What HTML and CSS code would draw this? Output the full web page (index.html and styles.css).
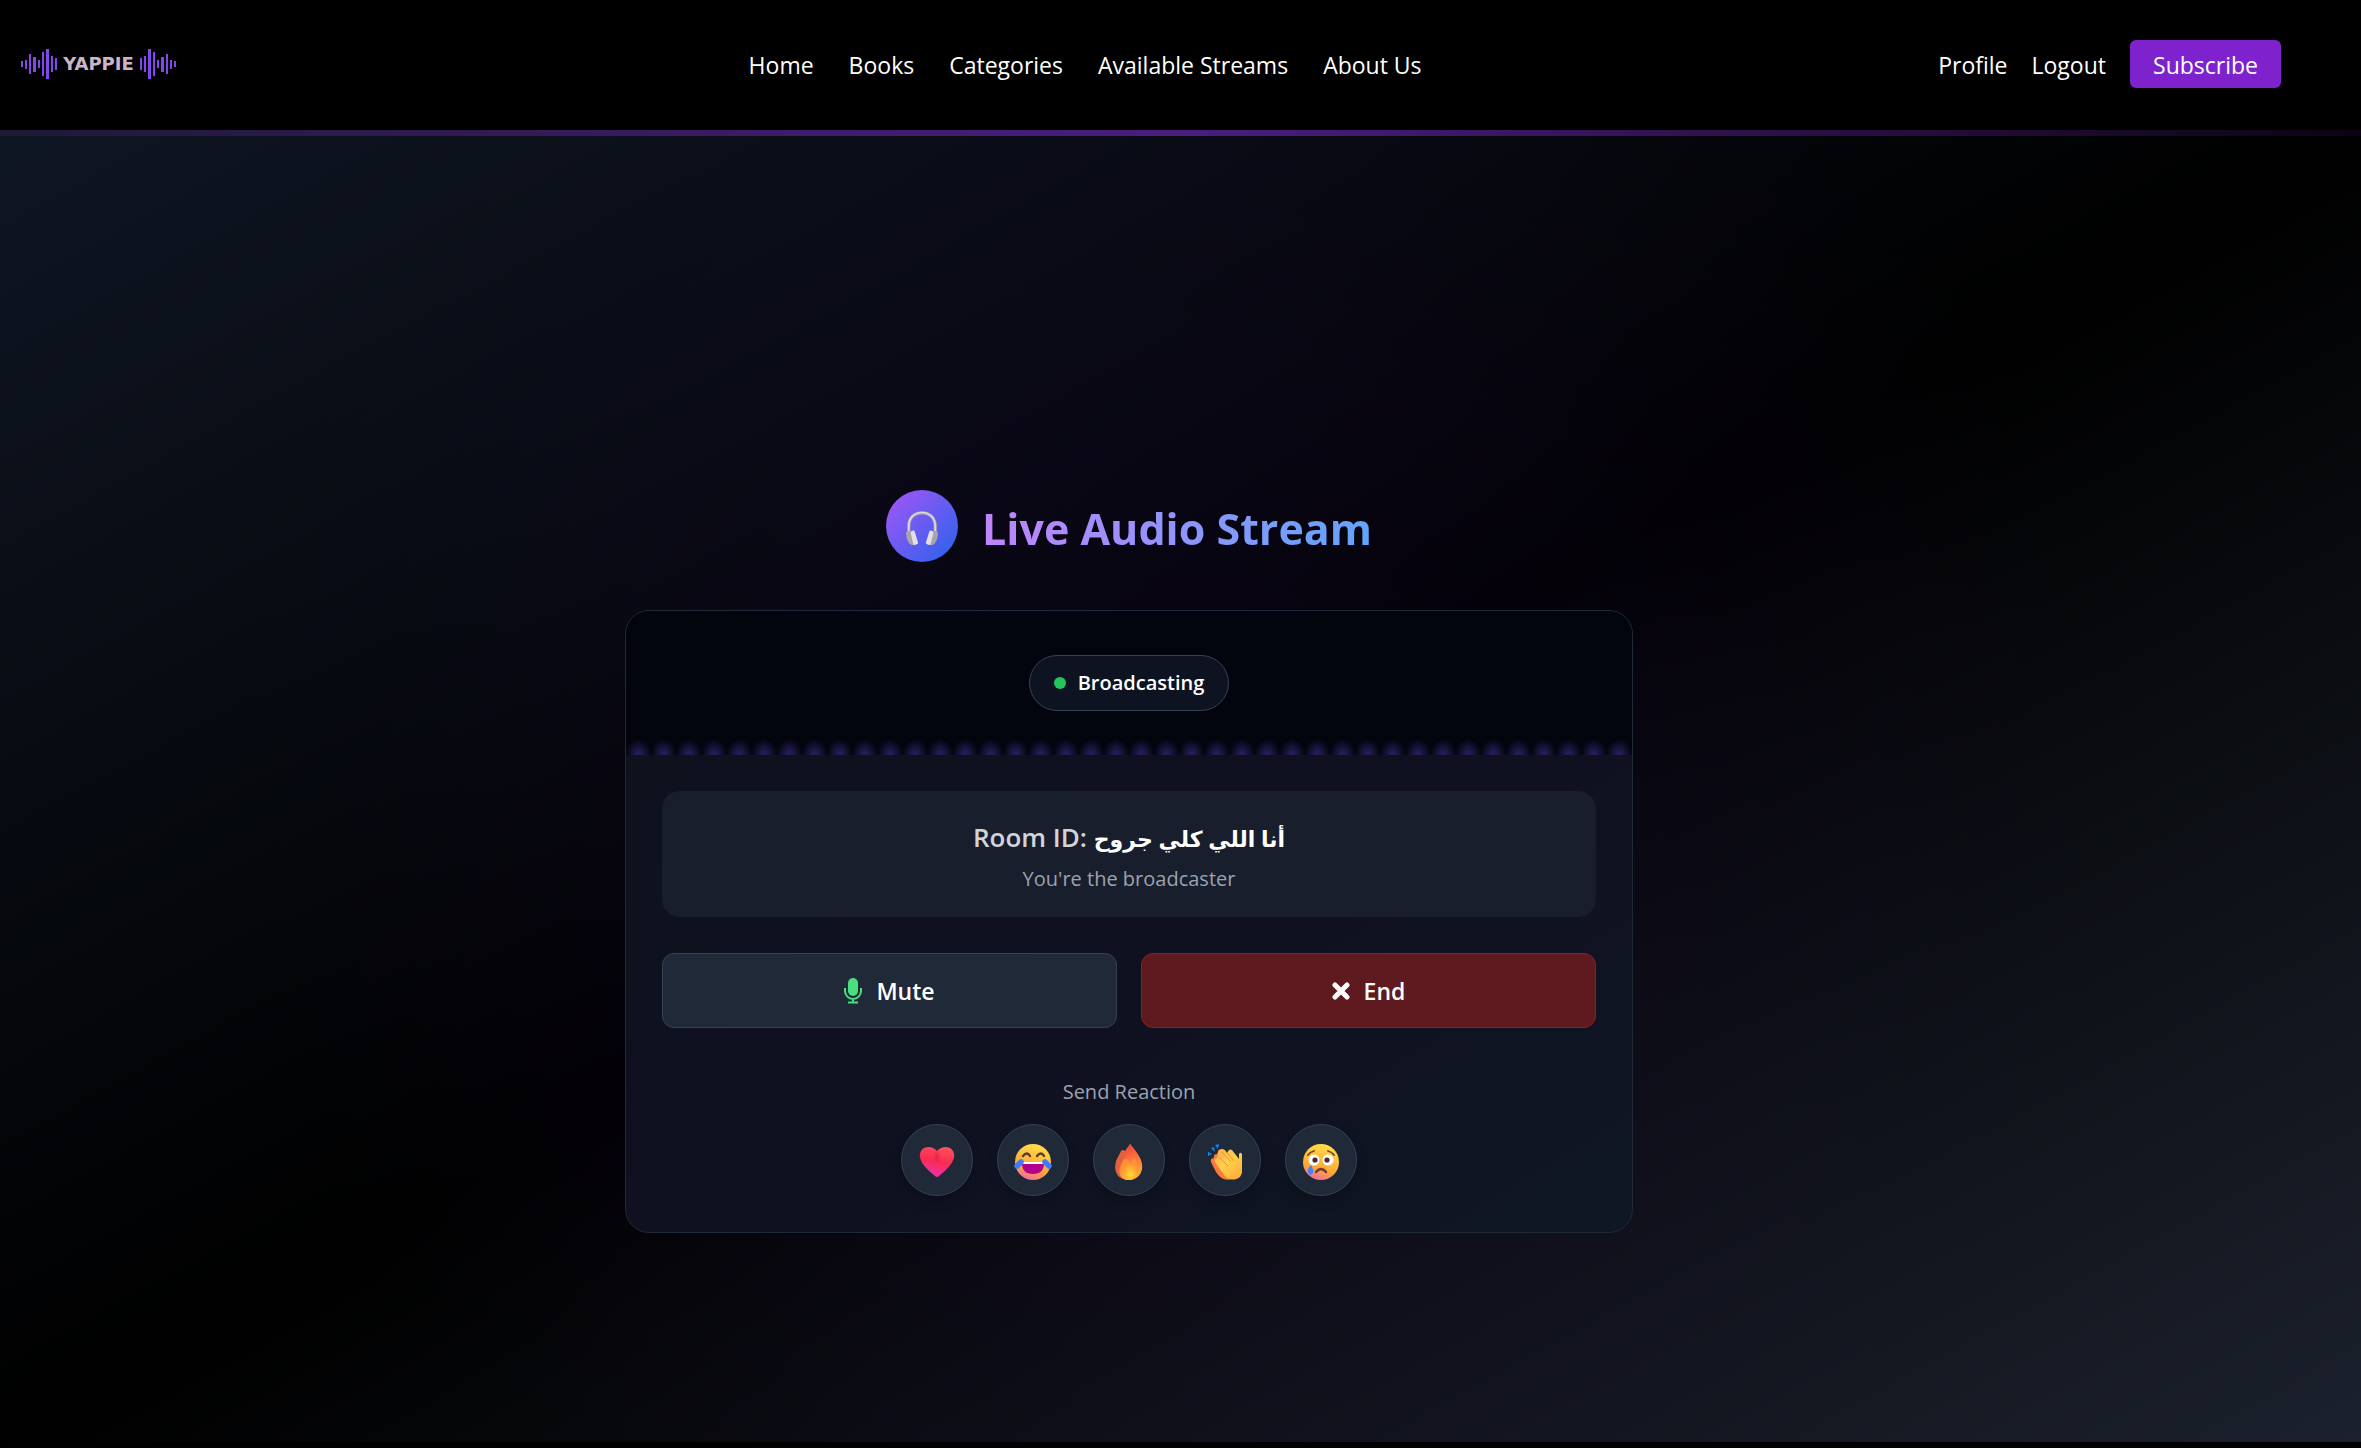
FILE: index.html
```html
<!DOCTYPE html>
<html lang="en">
<head>
<meta charset="utf-8">
<meta name="viewport" content="width=device-width, initial-scale=1">
<title>Yappie - Live Audio Stream</title>
<link rel="stylesheet" href="styles.css">
</head>
<body>
<header class="site-header">
  <a class="logo" href="#" aria-label="Yappie home">
    <svg class="wave" viewBox="0 0 38 32" aria-hidden="true"><path d="M1 13h2v6H1zM5 12h2v9H5zM9 6h2v20H9zM13 9h3v15h-3zM18 12h2v8h-2zM22 4h2v24h-2zM26 1h3v30h-3zM31 8h2v16h-2zM35 10h2v12h-2z"/></svg>
    <span class="wordmark">YAPPIE</span>
    <svg class="wave wave-right" viewBox="0 0 38 32" aria-hidden="true"><path d="M1 13h2v6H1zM5 12h2v9H5zM9 6h2v20H9zM13 9h3v15h-3zM18 12h2v8h-2zM22 4h2v24h-2zM26 1h3v30h-3zM31 8h2v16h-2zM35 10h2v12h-2z"/></svg>
  </a>
  <nav class="main-nav" aria-label="Main">
    <a href="#">Home</a>
    <a href="#">Books</a>
    <a href="#">Categories</a>
    <a href="#">Available Streams</a>
    <a href="#">About Us</a>
  </nav>
  <div class="account">
    <a href="#">Profile</a>
    <a href="#">Logout</a>
    <button class="subscribe" type="button">Subscribe</button>
  </div>
</header>
<div class="header-line"></div>
<main class="stage">
  <div class="title-row">
    <span class="title-icon" aria-hidden="true">
      <svg viewBox="0 0 36 36">
        <path d="M4 23V16C4 7 10 2 18 2s14 5 14 14v7" fill="none" stroke="#aaa5ae" stroke-width="3.4"/>
        <path d="M4 22V16C4 7 10 1.600 18 1.600s14 5.400 14 14.400v6" fill="none" stroke="#dcd7dd" stroke-width="1.800"/>
        <path d="M1 24q0-3 4-3l3 1 3 14H7Q2 34 1 24z" fill="#a9a3aa"/>
        <path d="M35 24q0-3-4-3l-3 1-3 14h4q5-2 6-12z" fill="#a9a3aa"/>
        <path d="M6 23q1-3 4-2l4 13q-1 2-5 2z" fill="#e3dfe5"/>
        <path d="M30 23q-1-3-4-2l-4 13q1 2 5 2z" fill="#e3dfe5"/>
      </svg>
    </span>
    <h1>Live Audio Stream</h1>
  </div>
  <section class="card">
    <div class="card-top">
      <div class="status"><span class="dot"></span>Broadcasting</div>
      <div class="bars" aria-hidden="true"></div>
    </div>
    <div class="card-body">
      <div class="room">
        <h2>Room ID: <bdi lang="ar">أنا اللي كلي جروح</bdi></h2>
        <p>You're the broadcaster</p>
      </div>
      <div class="controls">
        <button class="control" type="button">
          <svg class="mic" viewBox="0 0 18 26" aria-hidden="true"><rect x="4" y="0" width="10" height="18" rx="5" fill="currentColor"/><path d="M1 10v3a8 8 0 0 0 16 0v-3M9 21v3M4 24.500h10" fill="none" stroke="currentColor" stroke-width="2"/></svg>
          Mute
        </button>
        <button class="control end" type="button">
          <svg class="cross" viewBox="0 0 18 18" aria-hidden="true"><path d="M3 3l12 12M15 3L3 15" stroke="currentColor" stroke-width="5" stroke-linecap="round"/></svg>
          End
        </button>
      </div>
      <p class="reaction-label">Send Reaction</p>
      <div class="reactions">
        <button type="button" aria-label="Love">
          <svg viewBox="0 0 36 36"><defs><linearGradient id="heart" x1=".7" y1="0" x2=".4" y2="1"><stop stop-color="#ff5060"/><stop offset=".5" stop-color="#fa2b4f"/><stop offset="1" stop-color="#ee31b4"/></linearGradient><radialGradient id="heartShade"><stop stop-color="#c9204d" stop-opacity=".6"/><stop offset="1" stop-color="#c9204d" stop-opacity="0"/></radialGradient></defs><path d="M18 7C22 2 30 2 33 5.500c6 7.500-1 17-13 26.500q-2 2-4 0C4 22.500-3 13 3 5.500 6 2 14 2 18 7z" fill="url(#heart)"/><ellipse cx="18" cy="13" rx="4" ry="8" fill="url(#heartShade)"/></svg>
        </button>
        <button type="button" aria-label="Laugh">
          <svg viewBox="0 0 38 36"><defs><linearGradient id="face" x1=".7" y1="0" x2=".4" y2="1"><stop stop-color="#ffdf49"/><stop offset=".7" stop-color="#ffa736"/><stop offset="1" stop-color="#ee70a0"/></linearGradient></defs><circle cx="19" cy="18" r="18" fill="url(#face)"/><path d="M9 12q4-5 7 0M23 12q4-5 7 0" fill="none" stroke="#583a3a" stroke-width="2.400" stroke-linecap="round"/><path d="M8 19h22q0 11-11 11T8 19z" fill="#b3008d"/><path d="M8 19h22" stroke="#fff" stroke-width="2"/><path d="M7 18L3 22M31 18l4 4" stroke="#427aff" stroke-width="5.500" stroke-linecap="round"/></svg>
        </button>
        <button type="button" aria-label="Fire">
          <svg viewBox="0 0 36 36"><defs><linearGradient id="fire" x1=".4" y1="0" x2=".6" y2="1"><stop stop-color="#f33d3c"/><stop offset=".5" stop-color="#ff7d3f"/><stop offset="1" stop-color="#ffb136"/></linearGradient><radialGradient id="glow" cx=".55" cy=".75" r=".55"><stop stop-color="#ffd82f"/><stop offset="1" stop-color="#ff9136"/></radialGradient></defs><path d="M10 7q2-2 4 0l5-7q3 3 8 11c9 13 0 25-9 25C8 36 2 29 5 17z" fill="#df613d"/><path d="M19 0c3 4 7 8 10 14 6 12-1 22-11 22C9 36 6 28 10 20c3-6 5-10 9-20z" fill="url(#fire)"/><path d="M13 16q4-3 6 4 3-6 5-5c6 8 4 20-6 21-9 0-11-10-5-20z" fill="url(#glow)"/></svg>
        </button>
        <button type="button" aria-label="Applause">
          <svg viewBox="0 0 36 36"><defs><linearGradient id="hand" x1="0" y1="0" x2=".8" y2="1"><stop stop-color="#ffa84a"/><stop offset=".5" stop-color="#ffd04b"/><stop offset="1" stop-color="#ffae3a"/></linearGradient></defs><path d="M4 18q-1-4 3-4-1-4 3-4 2-5 7-4l5 7 3 22q-10 3-16-7z" fill="#f87a3d"/><path d="M11 11q-1-6 4-6 3 0 5 4 2-5 5-3l7 9 0-4q0-3 2-2l1 1v18c-1 9-13 10-18 3L8 18q-2-4 2-4z" fill="url(#hand)"/><path d="M12 13l9 9M15 8l9 10M20 9l7 8" stroke="#e99639" stroke-width="1"/><path d="M1 8l4 2-4 2zM4 4l4 4-1-5zM8 1l3 4 1-5z" fill="#1684ed"/></svg>
        </button>
        <button type="button" aria-label="Sad">
          <svg viewBox="0 0 36 36"><circle cx="18" cy="18" r="18" fill="url(#face)"/><path d="M5 11q2-3 6-4M31 11q-2-3-6-4" fill="none" stroke="#6d4334" stroke-width="1.800" stroke-linecap="round"/><circle cx="11" cy="16" r="5.500" fill="#fff"/><circle cx="25" cy="16" r="5.500" fill="#fff"/><circle cx="12" cy="16" r="2.600" fill="#4b2637"/><circle cx="24" cy="16" r="2.600" fill="#4b2637"/><path d="M13 28q5-6 10 0" fill="none" stroke="#693a3a" stroke-width="2.400" stroke-linecap="round"/><path d="M8 21q4 7 1 9-3 2-4-2-1-3 3-7z" fill="#4781f7"/></svg>
        </button>
      </div>
    </div>
  </section>
</main>
</body>
</html>
```
FILE: styles.css
```css
* { box-sizing: border-box; }
body {
  margin: 0;
  min-height: 100vh;
  display: flex;
  flex-direction: column;
  background: #000;
  color: #fff;
  font-family: "Open Sans", "Noto Sans", "DejaVu Sans", sans-serif;
  font-size: 23px;
  line-height: 36px;
}
h1, h2, p { margin: 0; }
a { color: inherit; text-decoration: none; }
button { font: inherit; color: inherit; cursor: pointer; }
svg { display: block; }

.site-header {
  display: flex;
  align-items: center;
  justify-content: space-between;
  height: 130px;
  padding: 0 80px 2px 20px;
  background: #000;
}
.logo { display: flex; align-items: center; width: 212px; }
.wave { width: 38px; height: 32px; fill: #8247ec; }
.wave-right { transform: scaleX(-1); }
.wordmark {
  width: 81px;
  font: 700 18px/32px "DejaVu Sans", sans-serif;
  text-align: center;
  color: #cbb5cd;
}
.main-nav { display: flex; gap: 35px; padding-top: 2px; }
.account { display: flex; align-items: center; gap: 24px; }
.account a { padding-top: 2px; }
.subscribe {
  height: 48px;
  padding: 2px 23px 0;
  border: 0;
  border-radius: 6px;
  background: #7e22ce;
}
.header-line {
  height: 6px;
  background: linear-gradient(to right, #1f1937, #4c1d80 50%, #0c0412);
}

.stage {
  flex: 1;
  display: flex;
  flex-direction: column;
  align-items: center;
  justify-content: center;
  margin-bottom: 6px;
  padding: 145px 103px 0 0;
  background:
    radial-gradient(circle at center, #3b0f8222, #3b0f8200 70%),
    linear-gradient(to bottom right, #0f1623, #000 50%, #1b212d);
}
.title-row { display: flex; align-items: center; gap: 24px; margin-bottom: 48px; }
.title-icon {
  display: grid;
  place-items: center;
  width: 72px;
  height: 72px;
  border-radius: 50%;
  background: linear-gradient(to bottom right, #a855f7, #2563eb);
}
.title-icon svg { width: 34px; height: 36px; margin-top: 4px; }
h1 {
  padding-top: 6px;
  font-size: 43px;
  line-height: 60px;
  font-weight: 700;
  color: transparent;
  background: linear-gradient(to right, #c084fc, #60a5fa);
  background-clip: text;
}
.card {
  width: 100%;
  max-width: 1008px;
  overflow: hidden;
  border: 1px solid #1f2937;
  border-radius: 24px;
  background: linear-gradient(to bottom right, #0e131d, #0f1020 50%, #0f1724);
}
.card-top {
  position: relative;
  display: grid;
  place-items: center;
  height: 144px;
  background: #02050e;
}
.status {
  display: flex;
  align-items: center;
  gap: 12px;
  height: 56px;
  padding: 0 24px;
  border: 1px solid #374151;
  border-radius: 28px;
  background: #0e1322;
  font-size: 20px;
  font-weight: 600;
}
.dot { width: 12px; height: 12px; border-radius: 50%; background: #22c55e; }
.bars {
  position: absolute;
  inset: auto 0 0;
  height: 18px;
  background: radial-gradient(13px 16px at 50% 100%, #281f5e, #211b4f 25%, #100f2c 65%, transparent) 0 0 / 2.5% 100%;
}
.card-body { padding: 36px; }
.room {
  padding: 25px 24px 20px;
  border-radius: 18px;
  background: #181e2c;
  text-align: center;
}
.room h2 { margin-bottom: 2px; font-size: 26px; line-height: 42px; font-weight: 600; color: #d1d5db; }
.room bdi { font-size: 22px; color: #fff; }
.room p, .reaction-label { font-size: 20px; color: #9ca3af; }
.controls { display: grid; grid-template-columns: 1fr 1fr; gap: 24px; margin-top: 36px; }
.control {
  display: flex;
  align-items: center;
  justify-content: center;
  gap: 14px;
  height: 75px;
  padding-top: 2px;
  border: 1px solid #374151;
  border-radius: 12px;
  background: #1f2937;
  font-weight: 600;
}
.end { border-color: #991b1b; background: #5e1a1f; }
.mic { width: 18px; height: 26px; color: #4ade80; }
.cross { width: 18px; height: 18px; }
.reaction-label { margin-top: 46px; text-align: center; }
.reactions { display: flex; justify-content: center; gap: 24px; margin-top: 14px; }
.reactions button {
  display: grid;
  place-items: center;
  width: 72px;
  height: 72px;
  padding: 4px 0 0;
  border: 1px solid #374151;
  border-radius: 50%;
  background: #1f2937;
  box-shadow: 0 6px 12px #0003;
}
.reactions svg { width: 38px; height: 36px; }
```
